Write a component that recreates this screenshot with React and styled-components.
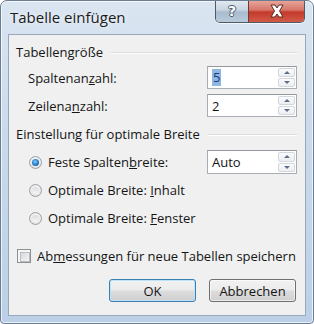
import React from 'react'
import styled, { createGlobalStyle } from 'styled-components'

const GlobalStyle = createGlobalStyle`
  html, body {
    margin: 0;
    padding: 0;
    background: #ffffff;
  }
  * {
    box-sizing: border-box;
  }
`

const font = `"Open Sans", "Noto Sans", "Liberation Sans", sans-serif`

const Window = styled.div`
  width: 314px;
  height: 324px;
  display: flex;
  flex-direction: column;
  border: 1px solid #6b7d92;
  border-radius: 7px 7px 4px 4px;
  background: linear-gradient(180deg, #dae5f1 0%, #cbdaeb 40%, #bbd0e7 100%);
  box-shadow: inset 0 0 0 1px rgba(255, 255, 255, 0.7);
  font-family: ${font};
  color: #000;
  overflow: hidden;
`

const TitleBar = styled.div`
  height: 33px;
  flex: none;
  display: flex;
  align-items: flex-start;
  justify-content: space-between;
  padding: 0 8px 0 9px;
`

const Title = styled.div`
  margin-top: 6px;
  font-size: 15px;
  line-height: 20px;
  color: #1b1b1b;
  text-shadow: 0 0 6px rgba(255, 255, 255, 0.9);
`

const CaptionButtons = styled.div`
  display: flex;
  margin-top: -1px;
  border: 1px solid #4d5a68;
  border-top: none;
  border-radius: 0 0 5px 5px;
  overflow: hidden;
  box-shadow: 0 1px 0 rgba(255, 255, 255, 0.7);
`

const CaptionButton = styled.div`
  width: ${(p) => p.$w}px;
  height: 22px;
  display: flex;
  align-items: center;
  justify-content: center;
  border-left: ${(p) => (p.$close ? '1px solid #6a3c38' : 'none')};
  background: ${(p) =>
    p.$close
      ? 'linear-gradient(180deg, #e9a99f 0%, #d7776b 45%, #c4392b 55%, #d25a48 100%)'
      : 'linear-gradient(180deg, #e3eaf2 0%, #c9d5e2 45%, #a9bccf 55%, #b9c9da 100%)'};
  box-shadow: inset 0 1px 0 rgba(255, 255, 255, 0.5);
`

const HelpGlyph = styled.span`
  font-family: "DejaVu Sans", sans-serif;
  font-weight: bold;
  font-size: 14px;
  line-height: 14px;
  color: #ffffff;
  text-shadow: -1px 0 #4b5a6b, 1px 0 #4b5a6b, 0 -1px #4b5a6b, 0 1px #4b5a6b;
`

const Client = styled.div`
  flex: 1;
  margin: 0 7px 7px 7px;
  border: 1px solid #97a8bb;
  background: #f0f0f0;
  padding: 7px 8px 0 7px;
  display: flex;
  flex-direction: column;
  font-size: 13px;
  color: #151515;
`

const GroupHeading = styled.div`
  height: 20px;
  margin-top: ${(p) => p.$top}px;
  display: flex;
  align-items: center;
  gap: 8px;
  white-space: nowrap;

  &::after {
    content: '';
    flex: 1;
    height: 1px;
    background: #dadde0;
    box-shadow: 0 1px 0 #ffffff;
  }
`

const Row = styled.div`
  height: ${(p) => p.$h || 23}px;
  margin-top: ${(p) => p.$top}px;
  padding-left: ${(p) => p.$indent}px;
  display: flex;
  align-items: center;
  white-space: nowrap;
`

const Label = styled.span`
  margin-left: ${(p) => p.$gap || 0}px;
`

const Spinner = styled.div`
  margin-left: auto;
  width: 90px;
  height: ${(p) => p.$h || 23}px;
  border: 1px solid #a9aeb6;
  border-top-color: #9499a0;
  background: #ffffff;
  display: flex;
  padding: 1px;
`

const SpinText = styled.div`
  flex: 1;
  display: flex;
  align-items: center;
  padding-left: 3px;
  font-size: 13px;
`

const Selected = styled.span`
  background: #8fb7e2;
  color: #163a78;
  padding: 0 1px;
  line-height: 17px;
`

const SpinButtons = styled.div`
  width: 17px;
  display: flex;
  flex-direction: column;
  gap: 1px;
`

const SpinButton = styled.div`
  flex: 1;
  display: flex;
  align-items: center;
  justify-content: center;
  border: 1px solid #d2d7de;
  border-radius: 2px;
  background: linear-gradient(180deg, #fbfbfc 0%, #eceef1 100%);
`

const Arrow = styled.span`
  width: 0;
  height: 0;
  border-left: 3px solid transparent;
  border-right: 3px solid transparent;
  ${(p) =>
    p.$down
      ? 'border-top: 3px solid #5c6e8a;'
      : 'border-bottom: 3px solid #5c6e8a;'}
`

const Radio = styled.span`
  width: 13px;
  height: 13px;
  flex: none;
  border-radius: 50%;
  border: 1px solid #98a0a8;
  background: radial-gradient(circle at 50% 40%, #ffffff 0%, #e8e8e8 60%, #d4d4d4 100%);
  display: flex;
  align-items: center;
  justify-content: center;

  &::after {
    content: '';
    width: 7px;
    height: 7px;
    border-radius: 50%;
    background: ${(p) =>
      p.$checked
        ? 'radial-gradient(circle at 45% 40%, #8fd1ff 0%, #2f86cf 45%, #124c86 100%)'
        : 'linear-gradient(180deg, #dcdcdc 0%, #f6f6f6 100%)'};
  }
`

const Checkbox = styled.span`
  width: 14px;
  height: 14px;
  flex: none;
  border: 1px solid #8e8f8f;
  background: #f6f6f6;
  padding: 2px;

  &::after {
    content: '';
    display: block;
    width: 100%;
    height: 100%;
    border: 1px solid #b8bec6;
    background: linear-gradient(135deg, #d7d9db 0%, #f3f4f5 100%);
  }
`

const ButtonRow = styled.div`
  margin-top: 11px;
  display: flex;
  justify-content: flex-end;
  gap: 13px;
  padding-right: 1px;
`

const Button = styled.div`
  width: 87px;
  height: 23px;
  display: flex;
  align-items: center;
  justify-content: center;
  border-radius: 3px;
  border: 1px solid ${(p) => (p.$default ? '#3c7fb1' : '#707070')};
  background: linear-gradient(180deg, #f2f2f2 0%, #ebebeb 48%, #dddddd 52%, #cfcfcf 100%);
  box-shadow: inset 0 0 0 1px ${(p) => (p.$default ? '#bde4f8' : 'rgba(255,255,255,0.6)')};
  font-size: 13px;
  color: #151515;
`

const Spin = ({ children, h }) => (
  <Spinner $h={h}>
    <SpinText>{children}</SpinText>
    <SpinButtons>
      <SpinButton>
        <Arrow />
      </SpinButton>
      <SpinButton>
        <Arrow $down />
      </SpinButton>
    </SpinButtons>
  </Spinner>
)

const CloseIcon = () => (
  <svg width="16" height="14" viewBox="0 0 16 14">
    <path
      d="M2 1 H6 L8 4 L10 1 H14 L10.5 7 L14 13 H10 L8 10 L6 13 H2 L5.5 7 Z"
      fill="#ffffff"
      stroke="#5a2a24"
      strokeWidth="1"
      strokeLinejoin="round"
    />
  </svg>
)

export default function App() {
  return (
    <>
      <GlobalStyle />
      <Window>
        <TitleBar>
          <Title>Tabelle einfügen</Title>
          <CaptionButtons>
            <CaptionButton $w={32}>
              <HelpGlyph>?</HelpGlyph>
            </CaptionButton>
            <CaptionButton $w={56} $close>
              <CloseIcon />
            </CaptionButton>
          </CaptionButtons>
        </TitleBar>
        <Client>
          <GroupHeading $top={0}>Tabellengröße</GroupHeading>
          <Row $top={4} $indent={12}>
            <Label>
              Spaltenan<u>z</u>ahl:
            </Label>
            <Spin>
              <Selected>5</Selected>
            </Spin>
          </Row>
          <Row $top={5} $indent={12}>
            <Label>
              Zeilena<u>n</u>zahl:
            </Label>
            <Spin>2</Spin>
          </Row>
          <GroupHeading $top={7}>Einstellung für optimale Breite</GroupHeading>
          <Row $top={6} $h={24} $indent={13}>
            <Radio $checked />
            <Label $gap={6}>
              Feste Spalten<u>b</u>reite:
            </Label>
            <Spin h={24}>Auto</Spin>
          </Row>
          <Row $top={4} $h={24} $indent={13}>
            <Radio />
            <Label $gap={6}>
              Optimale Breite: <u>I</u>nhalt
            </Label>
          </Row>
          <Row $top={4} $h={24} $indent={13}>
            <Radio />
            <Label $gap={6}>
              Optimale Breite: <u>F</u>enster
            </Label>
          </Row>
          <Row $top={14} $h={24} $indent={1}>
            <Checkbox />
            <Label $gap={6}>
              Ab<u>m</u>essungen für neue Tabellen speichern
            </Label>
          </Row>
          <ButtonRow>
            <Button $default>OK</Button>
            <Button>Abbrechen</Button>
          </ButtonRow>
        </Client>
      </Window>
    </>
  )
}
